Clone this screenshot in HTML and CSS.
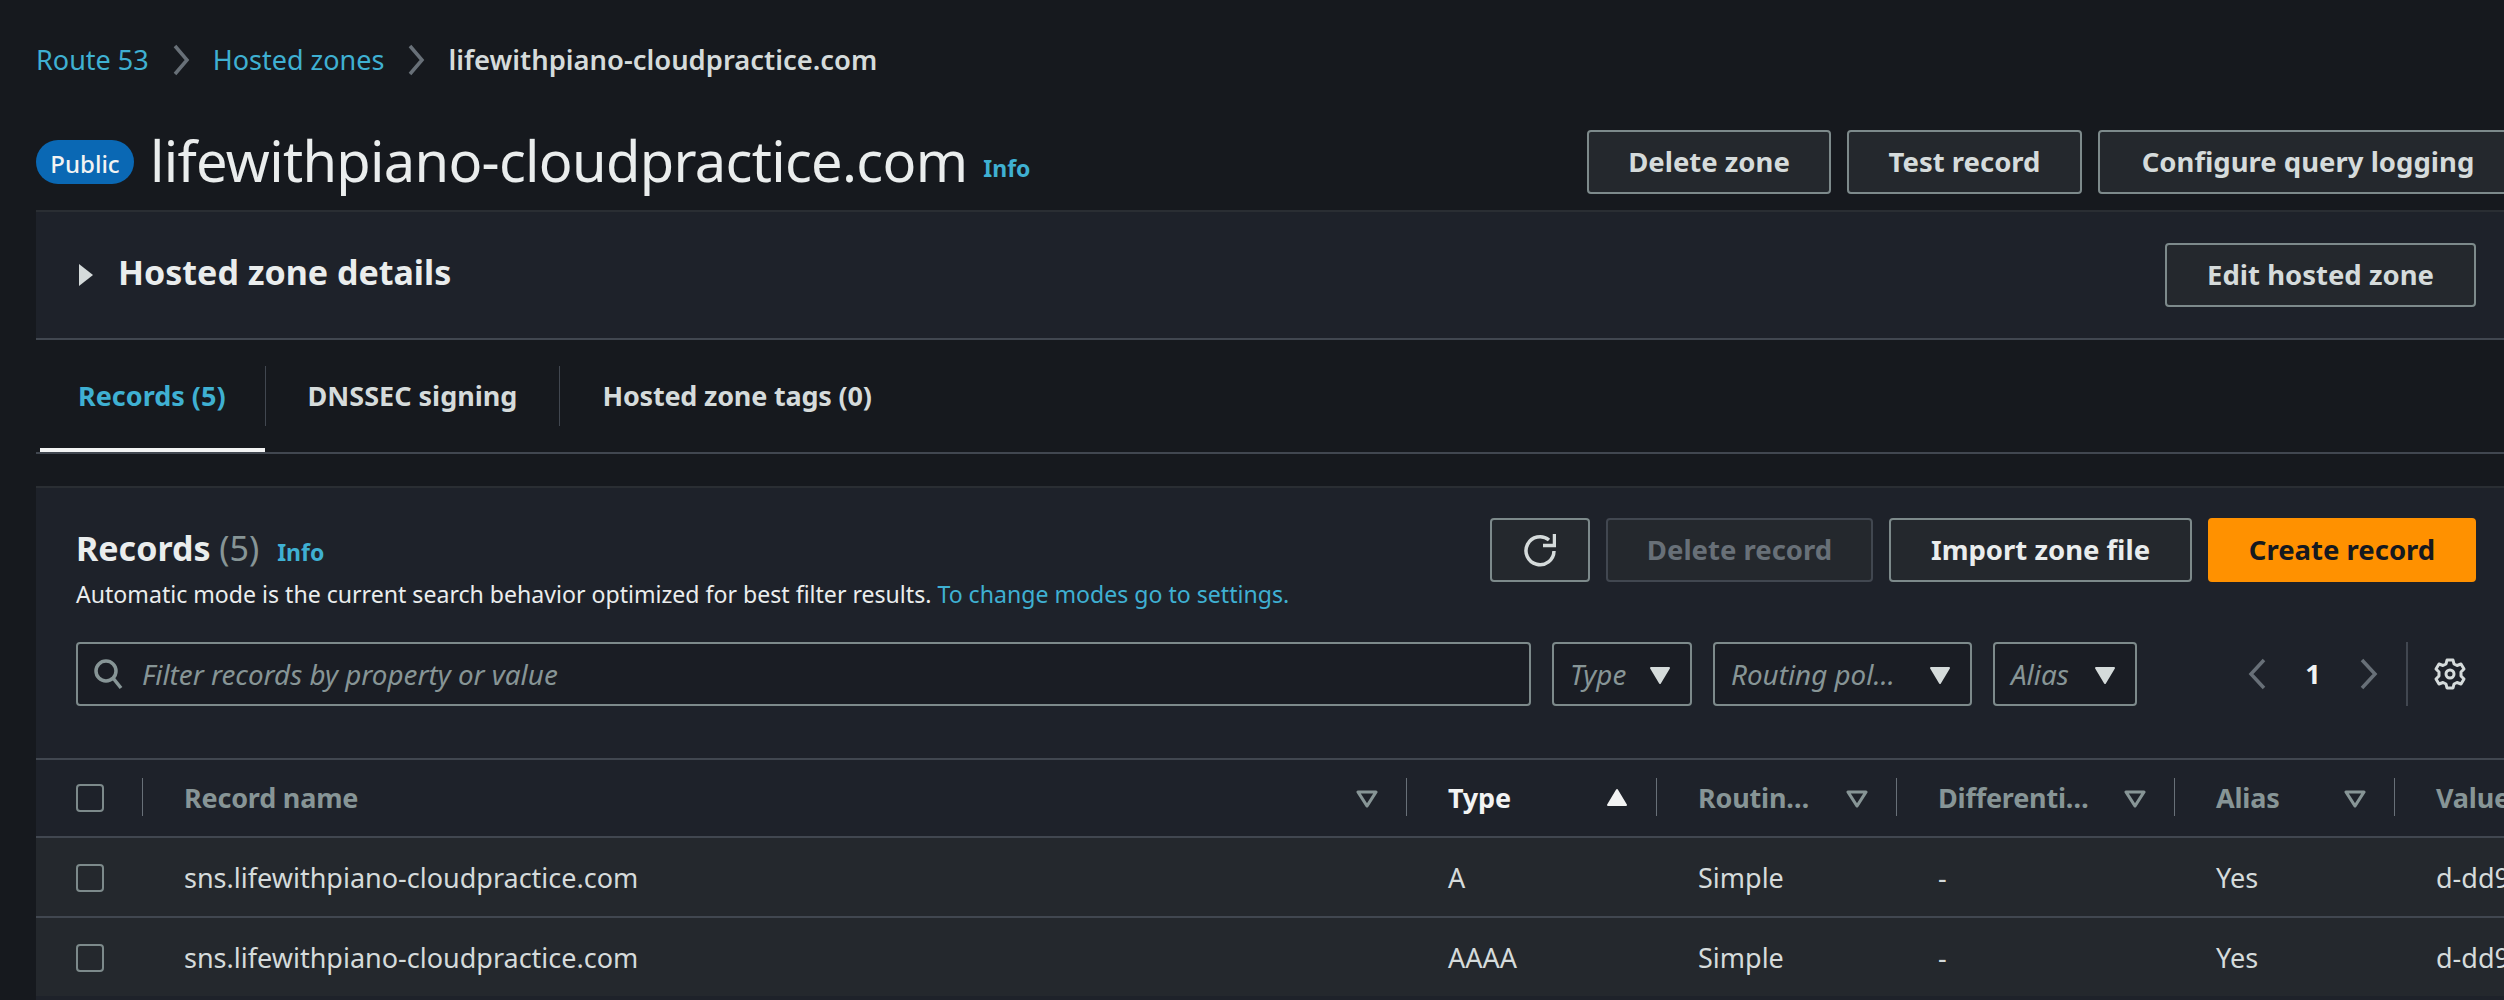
FILE: index.html
```html
<!DOCTYPE html>
<html lang="en">
<head>
  <meta charset="UTF-8">
  <title>lifewithpiano-cloudpractice.com</title>
  <link rel="stylesheet" href="styles.css">
</head>
<body>
  <svg class="sprites" width="0" height="0">
    <symbol id="caret-down" viewBox="0 0 16 16"><path d="M3.500 5h9L8 12.500z" fill="currentColor" stroke="currentColor" stroke-width="1" stroke-linejoin="round"/></symbol>
    <symbol id="caret-up" viewBox="0 0 16 16"><path d="M3.500 11.500h9L8 4z" fill="currentColor" stroke="currentColor" stroke-width="1" stroke-linejoin="round"/></symbol>
    <symbol id="caret-outline" viewBox="0 0 16 16"><path d="M3.500 5h9L8 12z" fill="none" stroke="currentColor" stroke-width="1.600" stroke-linejoin="round"/></symbol>
  </svg>

  <nav class="breadcrumbs">
    <a href="#">Route 53</a>
    <svg class="crumb-sep" viewBox="0 0 18 32"><path d="M3 2l12 14L3 30" fill="none" stroke="currentColor" stroke-width="3.500"/></svg>
    <a href="#">Hosted zones</a>
    <svg class="crumb-sep" viewBox="0 0 18 32"><path d="M3 2l12 14L3 30" fill="none" stroke="currentColor" stroke-width="3.500"/></svg>
    <span class="crumb-current">lifewithpiano-cloudpractice.com</span>
  </nav>

  <header class="page-header">
    <span class="badge">Public</span>
    <h1>lifewithpiano-cloudpractice.com</h1>
    <a class="info info-title" href="#">Info</a>
    <div class="header-actions">
      <button class="btn btn-delete-zone">Delete zone</button>
      <button class="btn btn-test">Test record</button>
      <button class="btn btn-logging">Configure query logging</button>
    </div>
  </header>

  <section class="details">
    <svg class="expand-icon" viewBox="0 0 16 32"><path d="M1 5l14 11L1 27z" fill="currentColor"/></svg>
    <h2>Hosted zone details</h2>
    <button class="btn btn-edit">Edit hosted zone</button>
  </section>

  <div class="tabs">
    <a class="tab tab-active" href="#">Records (5)</a>
    <a class="tab" href="#">DNSSEC signing</a>
    <a class="tab tab-last" href="#">Hosted zone tags (0)</a>
  </div>

  <section class="records">
    <div class="records-top">
      <div class="records-heading">
        <div class="records-title">
          <h2>Records <span class="count">(5)</span></h2>
          <a class="info" href="#">Info</a>
        </div>
        <p class="hint">Automatic mode is the current search behavior optimized for best filter results. <a href="#">To change modes go to settings.</a></p>
      </div>
      <div class="records-actions">
        <button class="btn btn-refresh" aria-label="Refresh">
          <svg viewBox="0 0 32 34" width="32" height="34"><path d="M30 18a14 14 0 1 1-5-11" fill="none" stroke="currentColor" stroke-width="3.500"/><path d="M30.500 1v11.500H19" fill="none" stroke="currentColor" stroke-width="3.500"/></svg>
        </button>
        <button class="btn btn-disabled">Delete record</button>
        <button class="btn btn-import">Import zone file</button>
        <button class="btn btn-primary">Create record</button>
      </div>
    </div>

    <div class="filters">
      <div class="filter-input">
        <svg viewBox="0 0 32 32" width="32" height="32"><circle cx="14" cy="13" r="10" fill="none" stroke="currentColor" stroke-width="3.500"/><path d="M21 20l8 10" fill="none" stroke="currentColor" stroke-width="3.500"/></svg>
        <span>Filter records by property or value</span>
      </div>
      <div class="select select-type"><span>Type</span><svg width="32" height="32"><use href="#caret-down"/></svg></div>
      <div class="select select-routing"><span>Routing pol…</span><svg width="32" height="32"><use href="#caret-down"/></svg></div>
      <div class="select select-alias"><span>Alias</span><svg width="32" height="32"><use href="#caret-down"/></svg></div>
      <div class="pager">
        <svg class="pager-arrow" viewBox="0 0 20 32" width="20" height="32"><path d="M17 2L4 16l13 14" fill="none" stroke="currentColor" stroke-width="3.500"/></svg>
        <span class="page-num">1</span>
        <svg class="pager-arrow" viewBox="0 0 20 32" width="20" height="32"><path d="M3 2l13 14L3 30" fill="none" stroke="currentColor" stroke-width="3.500"/></svg>
      </div>
      <div class="settings">
        <svg viewBox="0 0 32 32" width="32" height="32"><path d="M13 2h6l1 4 3 1.500 4-1.500 3 5-3 3v4l3 3-3 5-4-1.500-3 1.500-1 4h-6l-1-4-3-1.500-4 1.500-3-5 3-3v-4l-3-3 3-5 4 1.500 3-1.500z" fill="none" stroke="currentColor" stroke-width="3" stroke-linejoin="round"/><circle cx="16" cy="16" r="4" fill="none" stroke="currentColor" stroke-width="3"/></svg>
      </div>
    </div>

    <div class="table">
      <div class="row row-head">
        <div class="cell cell-check"><span class="checkbox"></span></div>
        <div class="cell"><span>Record name</span><svg class="sort" width="32" height="32"><use href="#caret-outline"/></svg></div>
        <div class="cell cell-sorted"><span>Type</span><svg class="sort" width="32" height="32"><use href="#caret-up"/></svg></div>
        <div class="cell"><span>Routin…</span><svg class="sort" width="32" height="32"><use href="#caret-outline"/></svg></div>
        <div class="cell"><span>Differenti…</span><svg class="sort" width="32" height="32"><use href="#caret-outline"/></svg></div>
        <div class="cell"><span>Alias</span><svg class="sort" width="32" height="32"><use href="#caret-outline"/></svg></div>
        <div class="cell"><span>Value</span></div>
      </div>
      <div class="row">
        <div class="cell cell-check"><span class="checkbox"></span></div>
        <div class="cell">sns.lifewithpiano-cloudpractice.com</div>
        <div class="cell">A</div>
        <div class="cell">Simple</div>
        <div class="cell">-</div>
        <div class="cell">Yes</div>
        <div class="cell">d-dd9</div>
      </div>
      <div class="row">
        <div class="cell cell-check"><span class="checkbox"></span></div>
        <div class="cell">sns.lifewithpiano-cloudpractice.com</div>
        <div class="cell">AAAA</div>
        <div class="cell">Simple</div>
        <div class="cell">-</div>
        <div class="cell">Yes</div>
        <div class="cell">d-dd9</div>
      </div>
    </div>
  </section>
</body>
</html>
```

FILE: styles.css
```css
html, body {
  margin: 0;
  height: 1000px;
  overflow: hidden;
}
body {
  background-color: #16191e;
  color: #d5dbdb;
  font-family: "Noto Sans", "Open Sans", sans-serif;
  font-size: 27px;
  line-height: 40px;
  padding-left: 36px;
  box-sizing: border-box;
}
a {
  color: #3fb0d2;
  text-decoration: none;
}
h1, h2, p {
  margin: 0;
}
.sprites {
  position: absolute;
}

.breadcrumbs {
  display: flex;
  align-items: center;
  height: 32px;
  padding-top: 44px;
  gap: 23px;
}
.crumb-sep {
  width: 18px;
  height: 32px;
  color: #687078;
}
.crumb-current {
  font-size: 27.400px;
  font-weight: 600;
}

.page-header {
  display: flex;
  align-items: center;
  height: 64px;
  margin-top: 54px;
  margin-right: -14px;
}
.badge {
  display: flex;
  align-items: center;
  justify-content: center;
  width: 98px;
  height: 44px;
  padding-top: 3px;
  box-sizing: border-box;
  border-radius: 22px;
  background-color: #0a68b4;
  color: #f2f3f3;
  font-size: 24px;
  font-weight: 500;
}
.page-header h1 {
  margin: 0 0 5px 16px;
  font-size: 56px;
  font-weight: 400;
  line-height: 64px;
  letter-spacing: -0.700px;
  color: #eaeded;
}
.info {
  font-size: 23px;
  font-weight: 700;
}
.info-title {
  margin: 12px 0 0 16px;
}
.header-actions {
  display: flex;
  gap: 16px;
  margin-left: auto;
}

.btn {
  height: 64px;
  box-sizing: border-box;
  padding: 0 0 2px;
  background-color: #24282d;
  border: 2px solid #7d8a8b;
  border-radius: 4px;
  color: #d5dbdb;
  font-family: inherit;
  font-size: 27.500px;
  font-weight: 700;
  white-space: nowrap;
}
.btn-delete-zone { width: 244px; }
.btn-test { width: 235px; }
.btn-logging { width: 420px; }
.btn-edit { width: 311px; margin-left: auto; }

.details {
  display: flex;
  align-items: center;
  height: 130px;
  box-sizing: border-box;
  margin-top: 16px;
  padding: 0 28px 0 42px;
  background-color: #1e222a;
  border-top: 2px solid #2a2e33;
  border-bottom: 2px solid #414750;
}
.expand-icon {
  width: 16px;
  height: 32px;
  color: #d5dbdb;
}
.details h2 {
  margin: 0 0 6px 24px;
  font-size: 34px;
  font-weight: 700;
  color: #eaeded;
}

.tabs {
  display: flex;
  height: 114px;
  box-sizing: border-box;
  padding: 26px 0 0 4px;
  border-bottom: 2px solid #414750;
  font-weight: 700;
}
.tab {
  position: relative;
  height: 60px;
  line-height: 60px;
  padding: 0 42px;
  color: #d5dbdb;
  border-right: 1px solid #414750;
  white-space: nowrap;
}
.tab-last {
  border-right: none;
  letter-spacing: -0.200px;
}
.tab-active {
  padding: 0 39px 0 38px;
  color: #3fb0d2;
}
.tab-active::after {
  content: "";
  position: absolute;
  left: 0;
  right: 0;
  top: 82px;
  height: 4px;
  background-color: #f2f3f3;
}

.records {
  margin-top: 32px;
  height: 520px;
  overflow: hidden;
  background-color: #1e222a;
  border-top: 2px solid #2a2e33;
}
.records-top {
  display: flex;
  justify-content: space-between;
  padding: 30px 28px 0 40px;
}
.records-title {
  display: flex;
  align-items: baseline;
  gap: 18px;
  height: 44px;
  margin-top: 8px;
}
.records-title h2 {
  font-size: 34px;
  font-weight: 700;
  line-height: 44px;
  color: #eaeded;
}
.count {
  font-weight: 400;
  color: #879596;
}
.hint {
  font-size: 23.100px;
  line-height: 36px;
  margin-top: 6px;
  color: #eaeded;
}
.records-actions {
  display: flex;
  gap: 16px;
}
.btn-refresh {
  display: flex;
  align-items: center;
  justify-content: center;
  width: 100px;
  padding: 0;
}
.btn-disabled {
  width: 267px;
  border-color: #414750;
  color: #687078;
}
.btn-import { width: 303px; color: #eaeded; }
.btn-primary {
  width: 268px;
  background-color: #ff9100;
  border-color: #ff9100;
  color: #16191f;
}

.filters {
  display: flex;
  align-items: center;
  height: 64px;
  margin-top: 30px;
  padding-left: 40px;
  gap: 21px;
}
.filter-input, .select {
  display: flex;
  align-items: center;
  height: 64px;
  box-sizing: border-box;
  background-color: #1a1d24;
  border: 2px solid #7d8a8b;
  border-radius: 4px;
  color: #879596;
  font-size: 27.800px;
  font-style: italic;
  white-space: nowrap;
}
.filter-input {
  width: 1455px;
  padding-left: 14px;
  gap: 18px;
}
.select {
  justify-content: space-between;
  padding: 0 14px 0 16px;
}
.select svg {
  color: #d5dbdb;
}
.select-type { width: 140px; }
.select-routing { width: 259px; }
.select-alias { width: 144px; }
.pager {
  display: flex;
  align-items: center;
  gap: 36px;
  margin-left: 89px;
  color: #687078;
}
.page-num {
  color: #f2f3f3;
  font-weight: 700;
  width: 20px;
  text-align: center;
}
.settings {
  display: flex;
  align-items: center;
  height: 64px;
  margin-left: 6px;
  padding-left: 26px;
  border-left: 2px solid #414750;
  color: #d5dbdb;
}

.table {
  margin-top: 52px;
  width: 2600px;
}
.row {
  display: grid;
  grid-template-columns: 107px 1264px 250px 240px 278px 220px 1fr;
  height: 80px;
  box-sizing: border-box;
  padding-top: 1px;
  background-color: #24282d;
  border-top: 2px solid #414750;
}
.row-head {
  height: 78px;
  padding-top: 0;
  background-color: #1e222a;
  color: #879596;
  font-weight: 700;
  letter-spacing: -0.200px;
}
.cell {
  display: flex;
  align-items: center;
  justify-content: space-between;
  padding: 0 24px 0 41px;
  white-space: nowrap;
  position: relative;
}
.row-head .cell::after {
  content: "";
  position: absolute;
  right: 0;
  top: 18px;
  height: 38px;
  border-right: 1px solid #687078;
}
.cell-check {
  padding: 0 0 0 40px;
  justify-content: flex-start;
}
.cell-sorted {
  color: #f2f3f3;
}
.checkbox {
  width: 28px;
  height: 28px;
  box-sizing: border-box;
  border: 2px solid #7d8a8b;
  border-radius: 4px;
}
```
